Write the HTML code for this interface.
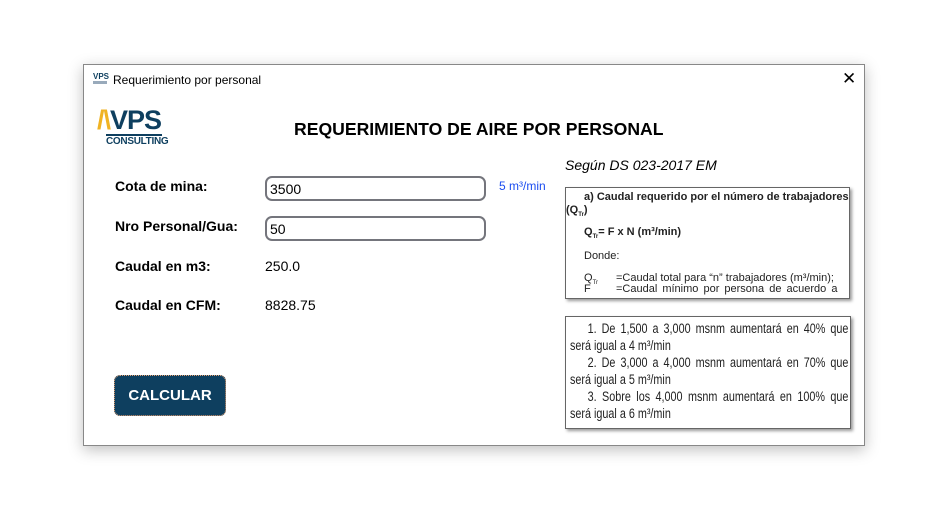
<!DOCTYPE html>
<html><head><meta charset="utf-8"><style>
*{margin:0;padding:0;box-sizing:border-box}
body{width:929px;height:513px;background:#fff;position:relative;font-family:"Liberation Sans",sans-serif;overflow:hidden}
.win{position:absolute;left:83px;top:64px;width:782px;height:382px;border:1px solid #888;background:#fff;box-shadow:0 4px 14px rgba(0,0,0,.25)}
.a{position:absolute;white-space:nowrap}
.lbl{font-weight:bold;font-size:14px;color:#000}
.inp{position:absolute;border:2px solid #74757c;border-radius:7px;background:#fff;font-size:14px;padding:3px 3px;width:221px;height:25px}
.box{position:absolute;border:1px solid #666;background:#fff;box-shadow:2px 2px 3px #999;font-family:"Liberation Sans",Arial,sans-serif;color:#222}
</style></head><body>
<div class="win">
 <div class="a" style="left:9px;top:7px;width:14px;height:14px;font-size:8px;font-weight:bold;color:#0e3f5f;line-height:9px">VPS<div style="height:3px;background:#9ab"></div></div>
 <div class="a" style="left:29px;top:8px;font-size:12px;color:#000">Requerimiento por personal</div>
 <div class="a" style="left:758px;top:4px;font-size:17px;color:#000">✕</div>
 <div class="a" style="left:13px;top:40px">
  <span style="font-size:27px;font-weight:bold;color:#0e3f5f;letter-spacing:-1px"><span style="color:#f0b323">/\</span>VPS</span>
 </div>
 <div class="a" style="left:22px;top:69px;width:56px;border-top:2px solid #0e3f5f;font-size:10px;font-weight:bold;color:#0e3f5f;letter-spacing:-.3px;text-align:center">CONSULTING</div>
 <div class="a" style="left:210px;top:54px;font-size:17.6px;font-weight:bold">REQUERIMIENTO DE AIRE POR PERSONAL</div>
 <div class="a" style="left:481px;top:92px;font-size:14px;font-style:italic">Según DS 023-2017 EM</div>
 <div class="a lbl" style="left:31px;top:113px">Cota de mina:</div>
 <div class="inp" style="left:181px;top:111px">3500</div>
 <div class="a" style="left:415px;top:114px;font-size:12px;color:#1a4cf0">5 m³/min</div>
 <div class="a lbl" style="left:31px;top:153px">Nro Personal/Gua:</div>
 <div class="inp" style="left:181px;top:151px">50</div>
 <div class="a lbl" style="left:31px;top:193px">Caudal en m3:</div>
 <div class="a" style="left:181px;top:193px;font-size:14px">250.0</div>
 <div class="a lbl" style="left:31px;top:232px">Caudal en CFM:</div>
 <div class="a" style="left:181px;top:232px;font-size:14px">8828.75</div>
 <div class="a" style="left:30px;top:310px;width:112px;height:41px;background:#0e3f5f;border-radius:6px;border:1px dotted #e8a070;color:#fff;font-weight:bold;font-size:15px;text-align:center;line-height:39px">CALCULAR</div>
 <div class="box" style="left:481px;top:122px;width:285px;height:112px;font-size:11px">
  <div class="a" style="left:18px;top:3px;font-weight:bold">a) Caudal requerido por el número de trabajadores</div>
  <div class="a" style="left:0;top:16px;font-weight:bold">(Q<sub style="font-size:6px">Tr</sub>)</div>
  <div class="a" style="left:18px;top:38px;font-weight:bold">Q<sub style="font-size:6px">Tr</sub>= F x N (m³/min)</div>
  <div class="a" style="left:18px;top:62px">Donde:</div>
  <div class="a" style="left:18px;top:84px">Q<sub style="font-size:6px">Tr</sub></div>
  <div class="a" style="left:50px;top:84px">=Caudal total para “n” trabajadores (m³/min);</div>
  <div class="a" style="left:18px;top:95px">F</div>
  <div class="a" style="left:50px;top:95px;word-spacing:2px">=Caudal mínimo por persona de acuerdo a</div>
 </div>
 <div class="box" style="left:481px;top:251px;width:286px;height:113px;font-size:13.5px;line-height:17px;padding:3px 0 0 4px">
  <div style="transform:scaleX(.8);transform-origin:0 0;width:348px;text-align:justify">
  <div style="text-indent:22px;text-align-last:justify">1. De 1,500 a 3,000 msnm aumentará en 40% que</div>
  <div>será igual a 4 m³/min</div>
  <div style="text-indent:22px;text-align-last:justify">2. De 3,000 a 4,000 msnm aumentará en 70% que</div>
  <div>será igual a 5 m³/min</div>
  <div style="text-indent:22px;text-align-last:justify">3. Sobre los 4,000 msnm aumentará en 100% que</div>
  <div>será igual a 6 m³/min</div>
  </div>
 </div>
</div>
</body></html>
